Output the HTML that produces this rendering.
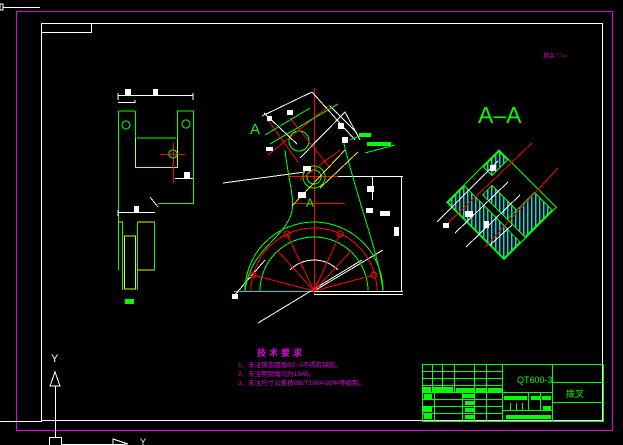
<!DOCTYPE html>
<html><head><meta charset="utf-8"><style>
html,body{margin:0;padding:0;background:#000;width:623px;height:445px;overflow:hidden}
svg{display:block}
text{font-family:"Liberation Sans","Noto Sans CJK SC",sans-serif}
</style></head><body>
<svg width="623" height="445" viewBox="0 0 623 445" xmlns="http://www.w3.org/2000/svg" shape-rendering="crispEdges">
<defs>
<pattern id="h" width="4" height="4" patternUnits="userSpaceOnUse" patternTransform="rotate(-45)">
<rect width="4" height="4" fill="#000"/>
<rect x="0" y="0" width="1.5" height="4" fill="#0dd"/>
</pattern>
</defs>
<rect width="623" height="445" fill="#000"/>
<rect x="0" y="4" width="3" height="6" fill="none" stroke="#fff"/>
<line x1="3" y1="7.5" x2="40" y2="7.5" stroke="#fff"/>
<rect x="16.5" y="11.5" width="596" height="419" fill="none" stroke="#e000e0"/>
<rect x="41.5" y="23.5" width="561" height="397" fill="none" stroke="#fff"/>
<rect x="41.5" y="23.5" width="50" height="9" fill="none" stroke="#fff"/>
<text x="543" y="58" font-size="6" fill="#e000e0">其余 ▽═</text>

<line x1="55.5" y1="386" x2="55.5" y2="437" stroke="#fff"/>
<polygon points="55,372 50,386 60,386" fill="none" stroke="#fff"/>
<text x="51" y="362" font-size="11" fill="#fff">Y</text>
<rect x="49.5" y="437.5" width="12" height="8" fill="none" stroke="#fff"/>
<line x1="62" y1="444.5" x2="120" y2="444.5" stroke="#fff"/>
<polygon points="113,439 128,444 113,445" fill="none" stroke="#fff"/>
<text x="140" y="445" font-size="9" fill="#fff">Y</text>

<g fill="none" stroke-width="1">
<path d="M118.5 111 V270 M118.5 111 H135 M177 111 H193.5 V203.5 H158" stroke="#0f0"/>
<path d="M135.5 111 V138 M177.5 111 V138 M137 138 H176" stroke="#0f0"/>
<path d="M135.5 138 V167.5 H177.5 V138" stroke="#ee0"/>
<line x1="160" y1="154.5" x2="185" y2="154.5" stroke="#f00"/>
<line x1="173.5" y1="143" x2="173.5" y2="183" stroke="#f00"/>
<circle cx="173" cy="154" r="4" stroke="#0f0"/>
<circle cx="126" cy="125" r="4" stroke="#0f0"/>
<circle cx="186" cy="124" r="4" stroke="#0f0"/>
<path d="M118 95.5 H193 M118 93 V100 M193 93 V100 M118 102.5 H135 V100" stroke="#fff"/>
<path d="M175 178.5 H193" stroke="#fff"/>
<path d="M118 212.5 H155 M118 210 V216" stroke="#fff"/>
<path d="M118.5 222 H122.5 V270 M137.5 222 H154.5 V270 H137" stroke="#ee0"/>
<path d="M122.5 222 V290 M137.5 222 V290" stroke="#0f0"/>
<path d="M124.5 236 H135.5 V289 H124.5 Z" stroke="#ee0"/>
<path d="M154.5 222 V270" stroke="#0f0"/>
</g>
<rect x="125" y="89" width="6" height="6" fill="#fff"/>
<rect x="153" y="89" width="5" height="6" fill="#fff"/>
<rect x="184" y="172" width="6" height="6" fill="#fff"/>
<rect x="134" y="206" width="5" height="6" fill="#fff"/>
<rect x="125" y="299" width="9" height="5" fill="#0f0"/>
<path d="M150 197 L158 207" stroke="#fff"/>

<g fill="none">
<line x1="314.5" y1="88" x2="314.5" y2="295" stroke="#f00"/>
<line x1="289" y1="176.5" x2="338" y2="176.5" stroke="#f00"/>
<line x1="293" y1="203.5" x2="345" y2="203.5" stroke="#f00"/>
<line x1="234" y1="291.5" x2="314" y2="291.5" stroke="#0dd"/>
<line x1="314" y1="291.5" x2="403" y2="291.5" stroke="#fff"/>
<line x1="314" y1="294.5" x2="403" y2="294.5" stroke="#fff"/>
<line x1="338" y1="176.5" x2="403" y2="176.5" stroke="#fff"/>
<line x1="401.5" y1="176" x2="401.5" y2="292" stroke="#fff"/>
<line x1="372.5" y1="176" x2="372.5" y2="200" stroke="#fff"/>
<line x1="223" y1="183" x2="305" y2="172" stroke="#fff"/>
<line x1="258" y1="323" x2="362" y2="260" stroke="#fff"/>
<line x1="233" y1="297" x2="265" y2="260" stroke="#fff"/>
<line x1="314" y1="291" x2="383" y2="250" stroke="#fff"/>
<path d="M245 291 A69 69 0 0 1 383 291" stroke="#0f0"/>
<path d="M251 291 A63 63 0 0 1 377 291" stroke="#f00"/>
<path d="M260 291 A54 54 0 0 1 368 291" stroke="#0f0"/>
<path d="M290 270 A34 34 0 0 1 338 270" stroke="#fff"/>
<path d="M245 291 C250 250 282 240 291 215 C296 200 288 180 285 150" stroke="#0f0"/>
<path d="M383 291 C378 250 360 210 343 140" stroke="#0f0"/>
<circle cx="314" cy="177" r="11" stroke="#0f0"/>
<circle cx="314" cy="177" r="7" stroke="#0f0"/>
<circle cx="299" cy="141" r="10" stroke="#0f0"/>
<circle cx="287" cy="234" r="3" stroke="#f00"/>
<circle cx="340" cy="234" r="3" stroke="#f00"/>
<circle cx="253" cy="275" r="3" stroke="#f00"/>
<circle cx="374" cy="275" r="3" stroke="#f00"/>
<path d="M314 291 L287 234 M314 291 L340 234 M314 291 L253 275 M314 291 L374 275 M314 291 L277 250 M314 291 L352 250" stroke="#f00"/>
<path d="M268 120 L298 162 M290 118 L330 168 M268 155 L330 105 M300 180 L340 150" stroke="#f00"/>
<path d="M292 206 L345 150 M320 188 L358 152" stroke="#ee0"/>
<path d="M262 116 L312 92 M300 158 L345 112 L360 140 M312 92 L355 140 M264 113 L297 144 M330 106 L357 133" stroke="#fff"/>
<path d="M265 135 L310 108 M270 144 L338 104" stroke="#0f0"/>
<path d="M350 140 L365 133 M365 153 L395 145" stroke="#0f0"/>
</g>
<rect x="359" y="133" width="12" height="4" fill="#0f0"/>
<rect x="367" y="142" width="24" height="4" fill="#0f0"/>
<rect x="367" y="186" width="7" height="6" fill="#fff"/>
<rect x="298" y="192" width="8" height="6" fill="#fff"/>
<rect x="303" y="166" width="8" height="5" fill="#fff"/>
<rect x="366" y="208" width="7" height="5" fill="#fff"/>
<rect x="394" y="227" width="5" height="9" fill="#fff"/>
<rect x="266" y="147" width="7" height="4" fill="#fff"/>
<rect x="267" y="116" width="5" height="5" fill="#fff"/>
<rect x="287" y="110" width="6" height="5" fill="#fff"/>
<rect x="338" y="123" width="6" height="6" fill="#fff"/>
<rect x="342" y="137" width="6" height="6" fill="#fff"/>
<rect x="232" y="294" width="6" height="5" fill="#fff"/>
<rect x="380" y="211" width="10" height="5" fill="#fff"/>
<text x="250" y="134" font-size="15" fill="#0f0">A</text>
<text x="306" y="207" font-size="12" fill="#0f0">A</text>

<text x="478" y="123" font-size="23" fill="#0f0" font-family="DejaVu Sans,sans-serif">A–A</text>
<g fill="none" transform="translate(499,150) rotate(45)">
<rect x="0" y="0" width="81" height="74" stroke="#0f0"/>
<rect x="1" y="50" width="79" height="23" fill="url(#h)" stroke="#0f0"/>
<rect x="1" y="1" width="12" height="22" fill="url(#h)" stroke="#0f0"/>
<rect x="55" y="5" width="25" height="38" fill="url(#h)" stroke="#0f0"/>
<rect x="20" y="30" width="35" height="13" fill="url(#h)" stroke="#0f0"/>
</g>
<g stroke="#f00" fill="none"><line x1="448" y1="223" x2="532" y2="143"/><line x1="485" y1="247" x2="558" y2="168"/></g>
<g stroke="#fff" fill="none"><path d="M437 222 L498 161 M455 233 L508 182 M466 247 L520 195 M490 245 L512 225"/></g>
<rect x="465" y="211" width="8" height="6" fill="#fff"/>
<rect x="490" y="165" width="6" height="6" fill="#fff"/>
<rect x="443" y="223" width="6" height="5" fill="#fff"/>
<rect x="484" y="221" width="5" height="7" fill="#fff"/>

<text x="257" y="356" font-size="9" fill="#e000e0" letter-spacing="3" font-weight="bold">技术要求</text>
<text x="238" y="367" font-size="6.5" fill="#e000e0">1、未注铸造圆角R2~3不得有缺陷。</text>
<text x="238" y="376" font-size="6.5" fill="#e000e0">2、未注明倒角均为1X45。</text>
<text x="238" y="385" font-size="6.5" fill="#e000e0">3、未注尺寸公差按GB/T1804-92中等级制。</text>

<g stroke="#0f0" fill="none">
<rect x="422.5" y="364.5" width="181" height="57"/>
<line x1="502.5" y1="364" x2="502.5" y2="421"/>
<line x1="552.5" y1="364" x2="552.5" y2="421"/>
<line x1="552" y1="382.5" x2="603" y2="382.5"/>
<line x1="552" y1="402.5" x2="603" y2="402.5"/>
<line x1="422" y1="371.5" x2="502" y2="371.5"/>
<line x1="422" y1="378.5" x2="502" y2="378.5"/>
<line x1="422" y1="385.5" x2="502" y2="385.5"/>
<line x1="422" y1="392.5" x2="502" y2="392.5"/>
<line x1="422" y1="399.5" x2="502" y2="399.5"/>
<line x1="422" y1="406.5" x2="502" y2="406.5"/>
<line x1="422" y1="413.5" x2="502" y2="413.5"/>
<line x1="432.5" y1="364" x2="432.5" y2="392"/>
<line x1="442.5" y1="364" x2="442.5" y2="392"/>
<line x1="454.5" y1="364" x2="454.5" y2="392"/>
<line x1="474.5" y1="364" x2="474.5" y2="421"/>
<line x1="486.5" y1="364" x2="486.5" y2="421"/>
<line x1="434.5" y1="392" x2="434.5" y2="421"/>
<line x1="462.5" y1="392" x2="462.5" y2="421"/>
<line x1="502" y1="392.5" x2="552" y2="392.5"/>
<line x1="502" y1="410.5" x2="552" y2="410.5"/>
<line x1="528.5" y1="392" x2="528.5" y2="410"/>
<line x1="540.5" y1="392" x2="540.5" y2="410"/>
</g>
<g fill="#0f0">
<rect x="423" y="387" width="8" height="5"/><rect x="432" y="387" width="10" height="5"/><rect x="443" y="387" width="10" height="5"/><rect x="456" y="388" width="18" height="4"/><rect x="476" y="388" width="10" height="4"/><rect x="488" y="388" width="14" height="4"/>
<rect x="424" y="394" width="8" height="5"/><rect x="463" y="394" width="11" height="4"/><rect x="465" y="401" width="9" height="4"/>
<rect x="423" y="407" width="9" height="5"/><rect x="465" y="408" width="9" height="4"/><rect x="424" y="414" width="8" height="5"/><rect x="465" y="415" width="9" height="4"/>
<rect x="504" y="396" width="23" height="4"/><rect x="531" y="396" width="9" height="4"/><rect x="542" y="396" width="9" height="4"/><rect x="543" y="406" width="8" height="4"/><rect x="506" y="415" width="45" height="4"/>
</g>
<g stroke="#0f0"><line x1="510.5" y1="403" x2="510.5" y2="410"/><line x1="516.5" y1="403" x2="516.5" y2="410"/><line x1="522.5" y1="403" x2="522.5" y2="410"/></g>
<text x="517" y="383" font-size="9" fill="#0f0">QT600-3</text>
<text x="566" y="397" font-size="9" fill="#0f0">拨叉</text>
<line x1="0" y1="421.5" x2="42" y2="421.5" stroke="#fff"/>
</svg>
</body></html>
